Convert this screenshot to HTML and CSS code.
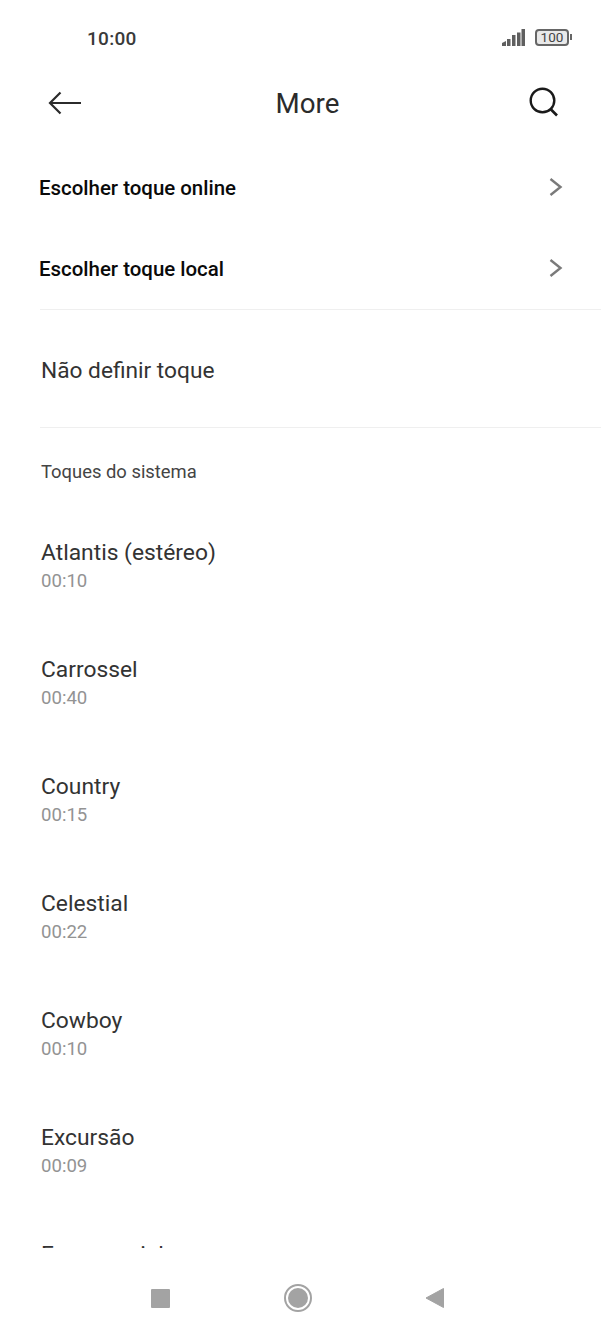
FILE: index.html
```html
<!DOCTYPE html>
<html lang="pt">
<head>
<meta charset="utf-8">
<title>More</title>
<link rel="stylesheet" href="styles.css">
</head>
<body>
<div class="screen">
  <div class="status">
    <span class="clock">10:00</span>
    <div class="status-icons">
      <svg class="signal" width="23" height="17" viewBox="0 0 23 17"><path d="M0 14 4 12V17H0Z"/><rect x="5" y="10" width="3.500" height="7"/><rect x="10" y="6" width="3.500" height="11"/><rect x="15" y="3.500" width="3.500" height="13.500"/><rect x="19.500" y="0" width="3.500" height="17"/></svg>
      <div class="battery"><span class="battery-body">100</span><span class="battery-tip"></span></div>
    </div>
  </div>
  <header class="topbar">
    <svg class="icon back" width="36" height="30" viewBox="0 0 36 30"><path d="M34 15H3M13.500 4.500 3 15l10.500 10.500" fill="none" stroke="#2b2b2b" stroke-width="2.200"/></svg>
    <h1 class="title">More</h1>
    <svg class="icon search" width="32" height="32" viewBox="0 0 32 32"><circle cx="14.500" cy="14.500" r="11.800" fill="none" stroke="#1a1a1a" stroke-width="2.400"/><path d="M22.500 23 29 29.500" stroke="#1a1a1a" stroke-width="2.600" fill="none"/></svg>
  </header>
  <main class="list">
    <div class="nav-row"><span class="nav-label">Escolher toque online</span><svg class="chevron" width="14" height="20" viewBox="0 0 14 20"><path d="M1.500 2 11.500 10 1.500 18" fill="none" stroke="#7a7a7a" stroke-width="2.400"/></svg></div>
    <div class="nav-row"><span class="nav-label">Escolher toque local</span><svg class="chevron" width="14" height="20" viewBox="0 0 14 20"><path d="M1.500 2 11.500 10 1.500 18" fill="none" stroke="#7a7a7a" stroke-width="2.400"/></svg></div>
    <div class="none-row">Não definir toque</div>
    <div class="section">Toques do sistema</div>
    <div class="tone"><span class="tone-name">Atlantis (estéreo)</span><span class="tone-time">00:10</span></div>
    <div class="tone"><span class="tone-name">Carrossel</span><span class="tone-time">00:40</span></div>
    <div class="tone"><span class="tone-name">Country</span><span class="tone-time">00:15</span></div>
    <div class="tone"><span class="tone-name">Celestial</span><span class="tone-time">00:22</span></div>
    <div class="tone"><span class="tone-name">Cowboy</span><span class="tone-time">00:10</span></div>
    <div class="tone"><span class="tone-name">Excursão</span><span class="tone-time">00:09</span></div>
    <div class="tone"><span class="tone-name">Exponencial</span><span class="tone-time">00:12</span></div>
  </main>
  <nav class="navbar">
    <span class="nav-square"></span>
    <span class="nav-home"><span class="nav-home-dot"></span></span>
    <svg width="20" height="22" viewBox="0 0 20 22"><path d="M18.500 1.500V20.500L1 11Z" fill="#a3a3a3" stroke="#a3a3a3" stroke-linejoin="round"/></svg>
  </nav>
</div>
</body>
</html>
```
FILE: styles.css
```css
* { box-sizing: border-box; }
html, body { margin: 0; padding: 0; background: #fff; }
body { font-family: Roboto, "Liberation Sans", sans-serif; }
.screen { width: 601px; height: 1336px; display: flex; flex-direction: column; overflow: hidden; }
.status { height: 64px; flex: none; display: flex; justify-content: space-between; align-items: center; padding: 10px 29px 0 87px; }
.clock { font-size: 19px; font-weight: 500; color: #3a3a3a; letter-spacing: .3px; padding-top: 2px; }
.status-icons { display: flex; align-items: center; gap: 10px; }
.signal { fill: #5f5f5f; }
.battery { display: flex; align-items: center; gap: 1px; }
.battery-body { width: 34px; height: 17px; border: 2px solid #666; border-radius: 4px; background: #e9e9e9; color: #444; font-size: 13.500px; line-height: 13px; text-align: center; }
.battery-tip { width: 2px; height: 6px; background: #666; }
.topbar { height: 78px; flex: none; display: flex; justify-content: space-between; align-items: center; padding: 0 41px 0 47px; }
.title { margin: 0 0 0 4px; font-size: 27.700px; font-weight: 400; color: #2b2b2b; }
.search { margin-bottom: 2px; }
.list { flex: 1; min-height: 0; overflow: hidden; padding-top: 6px; }
.nav-row { height: 81px; display: flex; justify-content: space-between; align-items: center; padding: 0 38px 0 39px; }
.nav-label { font-size: 20.450px; font-weight: 500; color: #0a0a0a; margin-bottom: 2px; }
.chevron { margin-bottom: 3px; }
.none-row { margin-left: 40px; height: 119px; margin-top: -1px; border-top: 1px solid #efefef; border-bottom: 1px solid #efefef; display: flex; align-items: center; padding: 4px 0 0 1px; font-size: 22.700px; color: #333; }
.section { height: 78px; padding: 34px 0 0 41px; font-size: 18.400px; line-height: 20px; color: #444; }
.tone { height: 117px; display: flex; flex-direction: column; justify-content: center; gap: 2px; padding: 2px 0 0 41px; }
.tone-name { font-size: 22.800px; line-height: 28px; color: #333; }
.tone-time { font-size: 18.600px; line-height: 24px; color: #939393; }
.navbar { height: 88px; flex: none; display: flex; align-items: center; padding: 12px 156px 0 151px; justify-content: space-between; }
.nav-square { width: 19px; height: 19px; background: #a3a3a3; border-radius: 1px; }
.nav-home { width: 28px; height: 28px; border: 2px solid #a3a3a3; border-radius: 50%; display: flex; align-items: center; justify-content: center; }
.nav-home-dot { width: 20px; height: 20px; border-radius: 50%; background: #a3a3a3; }
```
